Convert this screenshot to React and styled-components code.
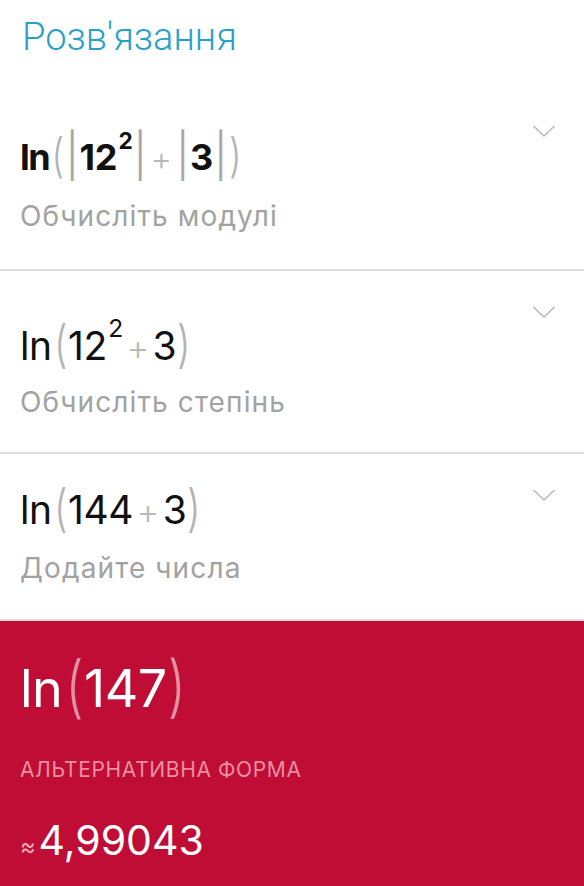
import React from 'react'
import styled, { createGlobalStyle } from 'styled-components'

const GlobalStyle = createGlobalStyle`
  html, body {
    margin: 0;
    padding: 0;
    background: #ffffff;
  }
  body {
    font-family: Inter, "Noto Sans", "Liberation Sans", sans-serif;
    -webkit-font-smoothing: antialiased;
  }
`

const Page = styled.div`
  width: 584px;
  min-height: 886px;
  display: flex;
  flex-direction: column;
  background: #fff;
`

const Header = styled.div`
  height: 90px;
  padding: 14px 22px 0;
  box-sizing: border-box;
`

const Title = styled.h1`
  margin: 0;
  font-family: Roboto, "Noto Sans", sans-serif;
  font-weight: 300;
  font-size: 38px;
  line-height: 46px;
  color: #2a9fc8;
`

const Step = styled.div`
  display: flex;
  justify-content: space-between;
  align-items: flex-start;
  padding: 32px 28px ${p => p.$bottom || 36}px 20px;
  border-bottom: 2px solid #dddddd;
`

const StepBody = styled.div`
  display: flex;
  flex-direction: column;
`

const Expr = styled.div`
  font-size: ${p => p.$size || 39}px;
  font-weight: ${p => (p.$bold ? 700 : 400)};
  line-height: ${p => p.$line || 48}px;
  padding-top: ${p => p.$raise || 0}px;
  color: ${p => p.$color || '#111'};
  white-space: nowrap;
  letter-spacing: -0.01em;
`

const Fn = styled.span`
  margin-right: 0.04em;
  letter-spacing: ${p => (p.$tight ? '-0.04em' : '-0.01em')};
`

const Paren = styled.span`
  display: inline-block;
  font-weight: 300;
  color: ${p => p.$color || '#b3b3b3'};
  transform: scaleY(1.3);
  transform-origin: 50% 62%;
  margin: 0 0.02em;
`

const Bar = styled.span`
  display: inline-block;
  font-weight: 400;
  color: #a8a8a8;
  transform: scaleY(1.2);
  transform-origin: 50% 62%;
  margin: 0 0.05em;
`

const Sup = styled.span`
  position: relative;
  top: -0.92em;
  font-size: 0.63em;
  margin-left: 0.06em;
`

const Op = styled.span`
  font-weight: 300;
  color: #b9b9b9;
  margin: 0 0.1em;
  font-size: 0.9em;
`

const Hint = styled.div`
  margin-top: ${p => p.$gap || 12}px;
  font-size: 28px;
  line-height: 30px;
  letter-spacing: 0.04em;
  color: #a2a2a2;
`

const Chevron = styled.svg`
  width: 24px;
  height: 14px;
  margin-top: 2px;
  flex-shrink: 0;
`

const Result = styled.div`
  flex: 1;
  background: #bf0d35;
  padding: 38px 20px 40px;
  display: flex;
  flex-direction: column;
  color: #fff;
`

const Label = styled.div`
  margin-top: 39px;
  font-size: 21px;
  line-height: 24px;
  color: #eb8fa3;
  letter-spacing: 0.03em;
`

const Approx = styled.div`
  margin-top: 35px;
  font-size: 41px;
  line-height: 46px;
  color: #fff;
`

const Wave = styled.span`
  font-size: 0.58em;
  color: #f1a9b8;
  margin-right: 0.12em;
`

const Down = () => (
  <Chevron viewBox="0 0 24 14">
    <polyline points="1.5,2 12,12 22.5,2" fill="none" stroke="#b9b9b9" strokeWidth="1.6" />
  </Chevron>
)

const steps = [
  {
    hint: 'Обчисліть модулі',
    bold: true,
    size: 36,
    raise: 11,
    gap: 15,
    bottom: 38,
    expr: (
      <>
        <Fn $tight>ln</Fn>
        <Paren>(</Paren>
        <Bar>|</Bar>12<Sup>2</Sup>
        <Bar>|</Bar>
        <Op>+</Op>
        <Bar>|</Bar>3<Bar>|</Bar>
        <Paren>)</Paren>
      </>
    ),
  },
  {
    hint: 'Обчисліть степінь',
    raise: 19,
    gap: 12,
    bottom: 35,
    expr: (
      <>
        <Fn>ln</Fn>
        <Paren>(</Paren>12<Sup>2</Sup>
        <Op>+</Op>3<Paren>)</Paren>
      </>
    ),
  },
  {
    hint: 'Додайте числа',
    raise: 0,
    gap: 18,
    bottom: 36,
    expr: (
      <>
        <Fn>ln</Fn>
        <Paren>(</Paren>144<Op>+</Op>3<Paren>)</Paren>
      </>
    ),
  },
]

export default function App() {
  return (
    <Page>
      <GlobalStyle />
      <Header>
        <Title>Розв'язання</Title>
      </Header>
      {steps.map((s, i) => (
        <Step key={i} $bottom={s.bottom}>
          <StepBody>
            <Expr $bold={s.bold} $size={s.size} $raise={s.raise}>
              {s.expr}
            </Expr>
            <Hint $gap={s.gap}>{s.hint}</Hint>
          </StepBody>
          <Down />
        </Step>
      ))}
      <Result>
        <Expr $size={52} $line={60} $color="#fff">
          <Fn>ln</Fn>
          <Paren $color="rgba(255,255,255,0.55)">(</Paren>147
          <Paren $color="rgba(255,255,255,0.55)">)</Paren>
        </Expr>
        <Label>АЛЬТЕРНАТИВНА ФОРМА</Label>
        <Approx>
          <Wave>≈</Wave>4,99043
        </Approx>
      </Result>
    </Page>
  )
}
